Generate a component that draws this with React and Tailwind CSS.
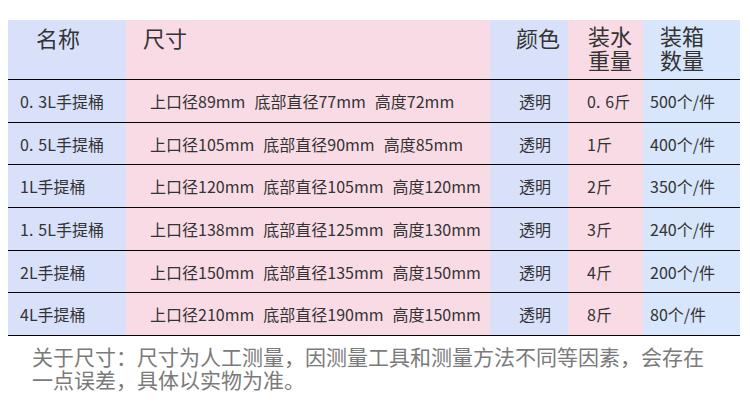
import React from "react";

const rows = [
  { name: ["0", ".", "3L手提桶"], size: ["上口径89mm", "底部直径77mm", "高度72mm"], weight: ["0", ".", "6斤"], qty: "500个/件" },
  { name: ["0", ".", "5L手提桶"], size: ["上口径105mm", "底部直径90mm", "高度85mm"], weight: ["1斤"], qty: "400个/件" },
  { name: ["1L手提桶"], size: ["上口径120mm", "底部直径105mm", "高度120mm"], weight: ["2斤"], qty: "350个/件" },
  { name: ["1", ".", "5L手提桶"], size: ["上口径138mm", "底部直径125mm", "高度130mm"], weight: ["3斤"], qty: "240个/件" },
  { name: ["2L手提桶"], size: ["上口径150mm", "底部直径135mm", "高度150mm"], weight: ["4斤"], qty: "200个/件" },
  { name: ["4L手提桶"], size: ["上口径210mm", "底部直径190mm", "高度150mm"], weight: ["8斤"], qty: "80个/件" },
];

// "0. 3" style spacing after the decimal point
const Spaced = ({ parts }) =>
  parts.length === 3 ? (
    <>
      {parts[0]}
      <span className="mr-[5px]">{parts[1]}</span>
      {parts[2]}
    </>
  ) : (
    <>{parts[0]}</>
  );

const grid = "grid grid-cols-[118px_364px_78px_75px_97px]";

export default function App() {
  return (
    <div className="h-[402px] w-[750px] overflow-hidden bg-white pt-[20px] font-['Noto_Sans_CJK_SC','Noto_Sans',sans-serif] text-[#333]">
      <div className="ml-[8px] w-[732px]">
        <div className={`${grid} h-[59px] text-[22px] leading-[24px]`}>
          <div className="bg-[#d9e1fa] pl-[28px] pt-[5px]">名称</div>
          <div className="bg-[#f9dbe6] pl-[17px] pt-[5px]">尺寸</div>
          <div className="bg-[#d9e1fa] pl-[26px] pt-[5px]">颜色</div>
          <div className="flex flex-col bg-[#f9dbe6] pl-[20px] pt-[3px]">
            <div>装水</div>
            <div>重量</div>
          </div>
          <div className="flex flex-col bg-[#d7e6fb] pl-[17px] pt-[3px]">
            <div>装箱</div>
            <div>数量</div>
          </div>
        </div>

        <div className="border-b border-black">
          {rows.map((r, i) => (
            <div key={i} className={`${grid} h-[42.7px] border-t border-black text-[16px]`}>
              <div className="flex items-center bg-[#d9e1fa] pl-[12px]">
                <Spaced parts={r.name} />
              </div>
              <div className="flex items-center gap-[9px] bg-[#f9dbe6] pl-[24px]">
                {r.size.map((s) => (
                  <span key={s}>{s}</span>
                ))}
              </div>
              <div className="flex items-center bg-[#d9e1fa] pl-[29px]">透明</div>
              <div className="flex items-center bg-[#f9dbe6] pl-[19px]">
                <Spaced parts={r.weight} />
              </div>
              <div className="flex items-center bg-[#d7e6fb] pl-[7px]">{r.qty}</div>
            </div>
          ))}
        </div>
      </div>

      <div className="mt-[9px] pl-[32px] text-[21px] leading-[23px] text-[#7a7a7a]">
        <div className="whitespace-nowrap">关于尺寸：尺寸为人工测量，因测量工具和测量方法不同等因素，会存在</div>
        <div className="whitespace-nowrap">一点误差，具体以实物为准。</div>
      </div>
    </div>
  );
}
